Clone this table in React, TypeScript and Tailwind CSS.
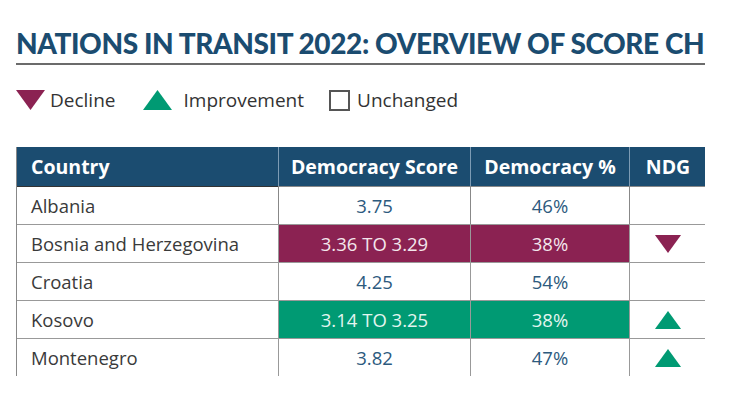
import React from "react";

type Trend = "down" | "up" | null;

type Row = {
  country: string;
  score: string;
  percent: string;
  tone: "plain" | "decline" | "improve";
  ndg: Trend;
};

const rows: Row[] = [
  { country: "Albania", score: "3.75", percent: "46%", tone: "plain", ndg: null },
  { country: "Bosnia and Herzegovina", score: "3.36 TO 3.29", percent: "38%", tone: "decline", ndg: "down" },
  { country: "Croatia", score: "4.25", percent: "54%", tone: "plain", ndg: null },
  { country: "Kosovo", score: "3.14 TO 3.25", percent: "38%", tone: "improve", ndg: "up" },
  { country: "Montenegro", score: "3.82", percent: "47%", tone: "plain", ndg: "up" },
];

function Triangle({ dir, className }: { dir: "up" | "down"; className?: string }) {
  return (
    <svg viewBox="0 0 29 20" className={className}>
      {dir === "down" ? (
        <polygon points="0,0 29,0 14.5,20" fill="#8b2252" />
      ) : (
        <polygon points="14.5,0 29,20 0,20" fill="#009a73" />
      )}
    </svg>
  );
}

export default function App() {
  return (
    <div className="h-[407px] w-[755px] overflow-hidden bg-white font-['Open_Sans',sans-serif] text-[#333]">
      <div className="w-[689px] pl-4 pt-[27px] box-content">
        <div className="whitespace-nowrap border-b-2 border-[#6b6b6b] pb-[4px]">
          <h1 className="font-['Lato',sans-serif] text-[28px] font-black leading-8 tracking-[-0.4px] text-[#1b4c70]">
            NATIONS IN TRANSIT 2022: OVERVIEW OF SCORE CH
          </h1>
        </div>

        <div className="mt-[23px] flex items-center text-[19px] leading-6 text-[#333]">
          <Triangle dir="down" className="h-5 w-[29px]" />
          <span className="ml-[5px]">Decline</span>
          <Triangle dir="up" className="ml-7 h-5 w-[29px]" />
          <span className="ml-[11px]">Improvement</span>
          <span className="ml-[25px] h-[21px] w-[21px] border-2 border-[#555]" />
          <span className="ml-[7px]">Unchanged</span>
        </div>

        <div className="mt-[35px] h-[230px] overflow-hidden">
          <div className="grid grid-cols-[261px_192px_159px_77px] border-l border-[#888]">
            <div className="flex h-[39px] items-center bg-[#1b4c70] pl-[14px] text-[19.5px] font-bold text-white">
              Country
            </div>
            <div className="flex h-[39px] items-center justify-center border-l border-[#7d9bb4] bg-[#1b4c70] text-[19.5px] font-bold text-white">
              Democracy Score
            </div>
            <div className="flex h-[39px] items-center justify-center border-l border-[#7d9bb4] bg-[#1b4c70] text-[19.5px] font-bold text-white">
              Democracy %
            </div>
            <div className="flex h-[39px] items-center justify-center border-l border-[#7d9bb4] bg-[#1b4c70] text-[19.5px] font-bold text-white">
              NDG
            </div>

            {rows.map((r, i) => {
              const fill =
                r.tone === "decline"
                  ? "bg-[#8b2252] text-[#f3e6ec]"
                  : r.tone === "improve"
                    ? "bg-[#009a73] text-[#e3f5ef]"
                    : "bg-white text-[#2d5a7e]";
              const top = i === 0 ? "border-t border-[#333]" : "border-t border-[#999]";
              return (
                <React.Fragment key={r.country}>
                  <div className={`flex h-[38px] items-center pl-[14px] text-[18.5px] text-[#3a3a3a] ${top}`}>
                    {r.country}
                  </div>
                  <div className={`flex h-[38px] items-center justify-center border-l border-[#888] text-[18.5px] ${fill} ${top}`}>
                    {r.score}
                  </div>
                  <div className={`flex h-[38px] items-center justify-center border-l border-[#888] text-[18.5px] ${fill} ${top}`}>
                    {r.percent}
                  </div>
                  <div className={`flex h-[38px] items-center justify-center border-l border-[#888] ${top}`}>
                    {r.ndg ? <Triangle dir={r.ndg} className="h-[18px] w-[28px]" /> : null}
                  </div>
                </React.Fragment>
              );
            })}
          </div>
        </div>
      </div>
    </div>
  );
}
